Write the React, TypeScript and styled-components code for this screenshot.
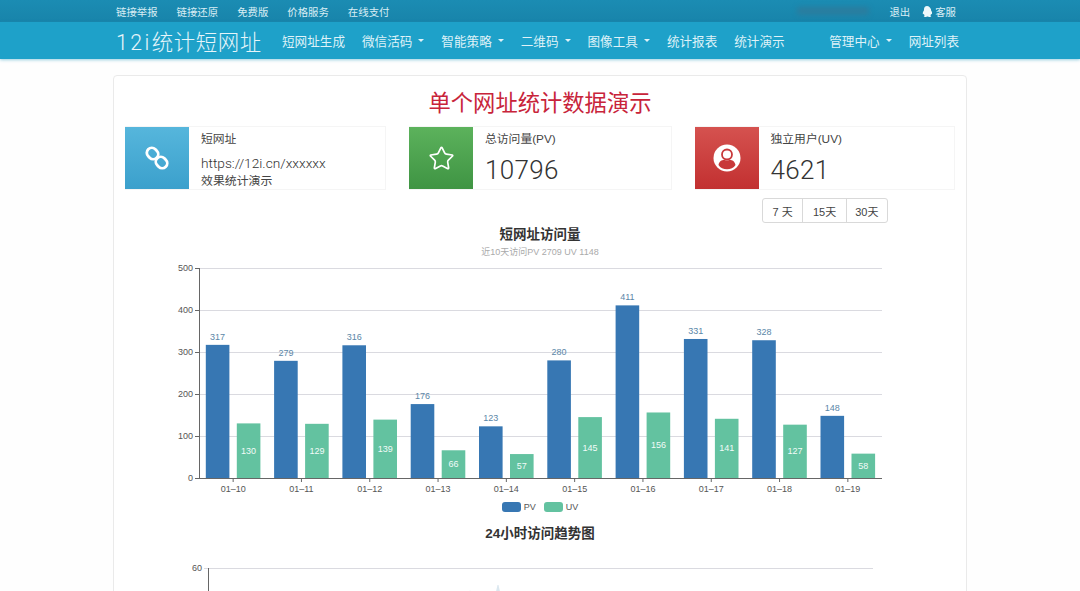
import React from 'react';
import styled, { createGlobalStyle } from 'styled-components';
import { Star } from 'lucide-react';

const GlobalStyle = createGlobalStyle`
  html, body {
    margin: 0;
    padding: 0;
    height: 100%;
    overflow: hidden;
    background: #fefefe;
    font-family: "Helvetica Neue", "Liberation Sans", "Noto Sans CJK SC", sans-serif;
  }
  #root {
    height: 100%;
  }
`;

const Page = styled.div`
  height: 591px;
  overflow: hidden;
  display: flex;
  flex-direction: column;
`;

const TopBar = styled.div`
  flex: none;
  height: 22px;
  background: linear-gradient(180deg, #1b8cb3 0%, #1884aa 100%);
  display: flex;
  align-items: center;
  justify-content: space-between;
  padding: 0 124px 0 116px;
  font-size: 10.4px;
  color: #d9eef5;
`;

const TopLinks = styled.div`
  display: flex;
  gap: 19px;
`;

const TopRight = styled.div`
  display: flex;
  align-items: center;
`;

const BlurredAccount = styled.span`
  width: 72px;
  height: 8px;
  margin-right: 20px;
  border-radius: 3px;
  background: #2a7d9f;
  filter: blur(2.5px);
`;

const ServiceLink = styled.span`
  display: flex;
  align-items: center;
  gap: 3px;
  margin-left: 12px;
`;

const NavBar = styled.div`
  flex: none;
  height: 37px;
  background: #1ea1c9;
  box-shadow: 0 1px 3px rgba(30, 150, 190, 0.45);
  display: flex;
  align-items: center;
  padding: 0 121px 0 116px;
`;

const Logo = styled.div`
  width: 166px;
  flex: none;
  font-family: Roboto, "Noto Sans CJK SC", sans-serif;
  font-weight: 300;
  font-size: 21.4px;
  letter-spacing: 0.6px;
  color: #e6f5fa;
  white-space: nowrap;
`;

const LogoLatin = styled.span`
  letter-spacing: 2.4px;
`;

const NavGroup = styled.div<{ $push?: boolean }>`
  display: flex;
  gap: 17px;
  margin-left: ${p => (p.$push ? 'auto' : '0')};
`;

const NavItem = styled.span`
  display: flex;
  align-items: center;
  font-size: 12.6px;
  color: #dff2f8;
  white-space: nowrap;
`;

const Caret = styled.i`
  width: 0;
  height: 0;
  margin-left: 6px;
  border-left: 3px solid transparent;
  border-right: 3px solid transparent;
  border-top: 3px solid #dff2f8;
`;

const Panel = styled.div`
  flex: none;
  margin: 16px 113px 0;
  padding: 12px 11px 0;
  height: 600px;
  border: 1px solid #eaeaea;
  border-radius: 4px;
  background: #fff;
`;

const PageTitle = styled.h1`
  margin: 0;
  height: 38px;
  font-size: 22.3px;
  line-height: 32px;
  font-weight: 400;
  text-align: center;
  color: #c8243a;
`;

const Cards = styled.div`
  display: grid;
  grid-template-columns: 261px 262.5px 260.5px;
  column-gap: 23px;
`;

const Card = styled.div`
  height: 64px;
  display: flex;
  border: 1px solid #f5f5f5;
  box-sizing: border-box;
`;

const IconBox = styled.div<{ $from: string; $to: string }>`
  flex: none;
  width: 64px;
  margin: 0 0 0 -1px;
  display: flex;
  align-items: center;
  justify-content: center;
  color: #fff;
  background: linear-gradient(180deg, ${p => p.$from} 0%, ${p => p.$to} 100%);
`;

const CardBody = styled.div`
  padding: 5px 0 0 12px;
  color: #444;
`;

const CardLabel = styled.div`
  font-size: 11.8px;
  line-height: 14px;
`;

const CardUrl = styled.div`
  margin-top: 9px;
  font-family: Roboto, sans-serif;
  font-weight: 300;
  font-size: 13.7px;
  line-height: 16px;
  color: #333;
`;

const CardNote = styled.div`
  margin-top: 2px;
  font-size: 11.9px;
  line-height: 17px;
`;

const CardNumber = styled.div`
  margin-top: 8px;
  font-family: Roboto, sans-serif;
  font-weight: 300;
  font-size: 26px;
  letter-spacing: 0.3px;
  line-height: 32px;
  color: #333;
`;

const RangeGroup = styled.div`
  display: flex;
  width: 126px;
  height: 25px;
  margin: 8px 0 0 637px;
  box-sizing: border-box;
  border: 1px solid #d9d9d9;
  border-radius: 3px;
`;

const RangeButton = styled.div<{ $width: number }>`
  width: ${p => p.$width}px;
  display: flex;
  align-items: center;
  justify-content: center;
  font-size: 11px;
  color: #444;
  & + & {
    border-left: 1px solid #d9d9d9;
  }
`;

const ChartTitle = styled.div<{ $top: number; $bottom?: number }>`
  margin-top: ${p => p.$top}px;
  margin-bottom: ${p => p.$bottom ?? 0}px;
  font-size: 13.5px;
  line-height: 18px;
  font-weight: 700;
  color: #333;
  text-align: center;
`;

const ChartSub = styled.div`
  margin-top: 2px;
  font-size: 9px;
  line-height: 12px;
  color: #aaa;
  text-align: center;
`;

const ChartSvg = styled.svg`
  display: block;
  font-family: "Liberation Sans", sans-serif;
  font-size: 9px;
`;

const Legend = styled.div`
  display: flex;
  justify-content: center;
  align-items: center;
  gap: 8px;
  height: 14px;
  margin-top: 6px;
  font-size: 9px;
  color: #555;
`;

const LegendItem = styled.span`
  display: flex;
  align-items: center;
  gap: 3px;
`;

const Swatch = styled.i<{ $color: string }>`
  width: 19px;
  height: 10px;
  border-radius: 3px;
  background: ${p => p.$color};
`;

const PV_COLOR = '#3777b3';
const UV_COLOR = '#63c2a0';

const days = [
  { d: '01-10', pv: 317, uv: 130 },
  { d: '01-11', pv: 279, uv: 129 },
  { d: '01-12', pv: 316, uv: 139 },
  { d: '01-13', pv: 176, uv: 66 },
  { d: '01-14', pv: 123, uv: 57 },
  { d: '01-15', pv: 280, uv: 145 },
  { d: '01-16', pv: 411, uv: 156 },
  { d: '01-17', pv: 331, uv: 141 },
  { d: '01-18', pv: 328, uv: 127 },
  { d: '01-19', pv: 148, uv: 58 },
];

const LEFT = 199;
const RIGHT = 882;
const BASE = 478;
const step = (RIGHT - LEFT) / 10;
const toY = (v: number) => BASE - (v / 500) * 210;

// svg coordinates are the page's own, the viewBox does the offset
const BarChart = () => (
  <ChartSvg width={830} height={236} viewBox="125 258 830 236">
    {[100, 200, 300, 400, 500].map(v => (
      <line key={v} x1={LEFT} x2={RIGHT} y1={toY(v) + 0.5} y2={toY(v) + 0.5} stroke="#dadae0" />
    ))}
    {[0, 100, 200, 300, 400, 500].map(v => (
      <g key={v}>
        <line x1={LEFT - 4} x2={LEFT} y1={toY(v) + 0.5} y2={toY(v) + 0.5} stroke="#666" />
        <text x={LEFT - 6} y={toY(v) + 3} textAnchor="end" fill="#555">{v}</text>
      </g>
    ))}
    {days.map((r, i) => {
      const x = LEFT + step * i;
      return (
        <g key={r.d}>
          <rect x={x + 6.8} y={toY(r.pv)} width={23.6} height={BASE - toY(r.pv)} fill={PV_COLOR} />
          <rect x={x + 37.8} y={toY(r.uv)} width={23.6} height={BASE - toY(r.uv)} fill={UV_COLOR} />
          <text x={x + 18.6} y={toY(r.pv) - 5} textAnchor="middle" fill="#5b87a8">{r.pv}</text>
          <text x={x + 49.6} y={(toY(r.uv) + BASE) / 2 + 3} textAnchor="middle" fill="#f2fbf8">{r.uv}</text>
          <line x1={x + step / 2} x2={x + step / 2} y1={BASE} y2={BASE + 4} stroke="#666" />
          <text x={x + step / 2} y={BASE + 14} textAnchor="middle" fill="#555">{r.d.replace('-', '–')}</text>
        </g>
      );
    })}
    <line x1={LEFT + 0.5} x2={LEFT + 0.5} y1={268} y2={BASE} stroke="#666" />
    <line x1={LEFT} x2={RIGHT} y1={BASE + 0.5} y2={BASE + 0.5} stroke="#666" />
  </ChartSvg>
);

const TrendChart = () => (
  <ChartSvg width={830} height={40} viewBox="125 558 830 40">
    <line x1={204} x2={873} y1={568.5} y2={568.5} stroke="#dadae0" />
    <line x1={208.5} x2={208.5} y1={568} y2={600} stroke="#666" />
    <text x={202} y={571} textAnchor="end" fill="#555">60</text>
    <path d="M466 596 L470 590 L474 596 Z" fill="#f1f5f8" />
    <path d="M495 596 L497.500 585 L498.500 585 L501 596 Z" fill="#dce8f0" />
  </ChartSvg>
);

const QqIcon = () => (
  <svg width={10} height={11} viewBox="0 0 10 11" fill="#eef8fb">
    <path d="M5 0C3 0 2 1.5 2 3.2v1.1C1.300 5.300.7 6.500.8 7.800c.1.700.5.700 1-.1.200.700.500 1.200 1 1.600-.6.200-1 .500-1 .900 0 .500 1 .800 2 .800.600 0 1.100-.100 1.500-.400h.4c.4.300.9.400 1.500.400 1 0 2-.300 2-.800 0-.400-.400-.700-1-.900.500-.400.800-.900 1-1.600.5.800.900.800 1 .100.100-1.300-.500-2.500-1.200-3.500V3.200C8 1.500 7 0 5 0z" />
  </svg>
);

const ChainIcon = () => (
  <svg width={26} height={26} viewBox="0 0 26 26" fill="none" stroke="#fff" strokeWidth={2.8}>
    <rect x={2.5} y={3.5} width={12} height={10} rx={5} transform="rotate(45 8.5 8.5)" />
    <rect x={11.500} y={12.500} width={12} height={10} rx={5} transform="rotate(45 17.5 17.5)" />
  </svg>
);

const UserIcon = () => (
  <svg width={28} height={28} viewBox="0 0 28 28">
    <circle cx={14} cy={14} r={13.500} fill="#fff" />
    <circle cx={14} cy={10.500} r={5} fill="none" stroke="#c8383a" strokeWidth={1.800} />
    <path d="M5.500 21c.6-3.800 3.400-5 5.500-5.300 1.800 1 4.200 1 6 0 2.100.3 4.900 1.500 5.500 5.300-1.800 3-5 4.300-8.500 4.300S7.300 24 5.500 21z" fill="#c8383a" />
  </svg>
);

const App: React.FC = () => (
  <Page>
    <GlobalStyle />
    <TopBar>
      <TopLinks>
        <span>链接举报</span>
        <span>链接还原</span>
        <span>免费版</span>
        <span>价格服务</span>
        <span>在线支付</span>
      </TopLinks>
      <TopRight>
        <BlurredAccount />
        <span>退出</span>
        <ServiceLink><QqIcon />客服</ServiceLink>
      </TopRight>
    </TopBar>
    <NavBar>
      <Logo><LogoLatin>12i</LogoLatin>统计短网址</Logo>
      <NavGroup>
        <NavItem>短网址生成</NavItem>
        <NavItem>微信活码<Caret /></NavItem>
        <NavItem>智能策略<Caret /></NavItem>
        <NavItem>二维码<Caret /></NavItem>
        <NavItem>图像工具<Caret /></NavItem>
        <NavItem>统计报表</NavItem>
        <NavItem>统计演示</NavItem>
      </NavGroup>
      <NavGroup $push>
        <NavItem>管理中心<Caret /></NavItem>
        <NavItem>网址列表</NavItem>
      </NavGroup>
    </NavBar>
    <Panel>
      <PageTitle>单个网址统计数据演示</PageTitle>
      <Cards>
        <Card>
          <IconBox $from="#56b6dc" $to="#3ba0cc"><ChainIcon /></IconBox>
          <CardBody>
            <CardLabel>短网址</CardLabel>
            <CardUrl>https://12i.cn/xxxxxx</CardUrl>
            <CardNote>效果统计演示</CardNote>
          </CardBody>
        </Card>
        <Card>
          <IconBox $from="#5cb25c" $to="#3f9443"><Star size={27} strokeWidth={1.5} /></IconBox>
          <CardBody>
            <CardLabel>总访问量(PV)</CardLabel>
            <CardNumber>10796</CardNumber>
          </CardBody>
        </Card>
        <Card>
          <IconBox $from="#d5524f" $to="#c23030"><UserIcon /></IconBox>
          <CardBody>
            <CardLabel>独立用户(UV)</CardLabel>
            <CardNumber>4621</CardNumber>
          </CardBody>
        </Card>
      </Cards>
      <RangeGroup>
        <RangeButton $width={40}>7 天</RangeButton>
        <RangeButton $width={43}>15天</RangeButton>
        <RangeButton $width={41}>30天</RangeButton>
      </RangeGroup>
      <ChartTitle $top={3}>短网址访问量</ChartTitle>
      <ChartSub>近10天访问PV 2709 UV 1148</ChartSub>
      <BarChart />
      <Legend>
        <LegendItem><Swatch $color={PV_COLOR} />PV</LegendItem>
        <LegendItem><Swatch $color={UV_COLOR} />UV</LegendItem>
      </Legend>
      <ChartTitle $top={11} $bottom={15}>24小时访问趋势图</ChartTitle>
      <TrendChart />
    </Panel>
  </Page>
);

export default App;
